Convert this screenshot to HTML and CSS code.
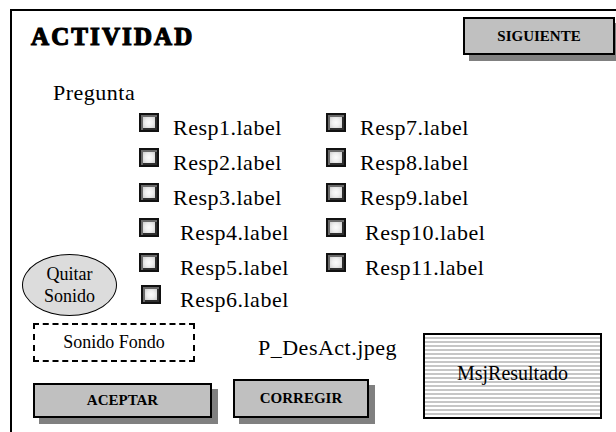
FILE: index.html
```html
<!DOCTYPE html>
<html lang="es">
<head>
<meta charset="utf-8">
<title>Actividad</title>
<link rel="stylesheet" href="styles.css">
</head>
<body>
<div class="frame">
  <header class="top">
    <h1 class="title">ACTIVIDAD</h1>
    <div class="btn btn-next">SIGUIENTE</div>
  </header>
  <p class="question">Pregunta</p>
  <section class="answers">
    <div class="side"><div class="mute">Quitar<br>Sonido</div></div>
    <ul class="col col-a">
      <li class="opt"><span class="box"></span><span class="lbl">Resp1.label</span></li>
      <li class="opt"><span class="box"></span><span class="lbl">Resp2.label</span></li>
      <li class="opt"><span class="box"></span><span class="lbl">Resp3.label</span></li>
      <li class="opt shift"><span class="box"></span><span class="lbl">Resp4.label</span></li>
      <li class="opt shift tight"><span class="box"></span><span class="lbl">Resp5.label</span></li>
      <li class="opt shift nudge"><span class="box"></span><span class="lbl">Resp6.label</span></li>
    </ul>
    <ul class="col col-b">
      <li class="opt"><span class="box"></span><span class="lbl">Resp7.label</span></li>
      <li class="opt"><span class="box"></span><span class="lbl">Resp8.label</span></li>
      <li class="opt"><span class="box"></span><span class="lbl">Resp9.label</span></li>
      <li class="opt shift"><span class="box"></span><span class="lbl">Resp10.label</span></li>
      <li class="opt shift"><span class="box"></span><span class="lbl">Resp11.label</span></li>
    </ul>
  </section>
  <section class="bottom">
    <div class="stack stack-left">
      <div class="sound">Sonido Fondo</div>
      <div class="btn btn-ok">ACEPTAR</div>
    </div>
    <div class="stack stack-mid">
      <p class="img-name">P_DesAct.jpeg</p>
      <div class="btn btn-fix">CORREGIR</div>
    </div>
    <div class="result">MsjResultado</div>
  </section>
</div>
</body>
</html>
```
FILE: styles.css
```css
* { box-sizing: border-box; }
html, body { margin: 0; padding: 0; background: #fff; overflow: hidden; }
.frame {
  font-family: "Liberation Serif", serif;
  color: #000;
  margin: 9px 0 0 10px;
  width: 606px;
  height: 423px;
  border-top: 2px solid #000;
  border-left: 2px solid #000;
}
.top {
  display: flex;
  align-items: flex-start;
  padding-top: 6px;
  height: 44px;
}
.title {
  font-family: "Liberation Serif", serif;
  margin: 7px 0 0 19px;
  font-size: 25px;
  line-height: 25px;
  font-weight: bold;
  letter-spacing: 2.1px;
  -webkit-text-stroke: 1.2px #000;
}
.btn {
  display: flex;
  align-items: center;
  justify-content: center;
  background: #c0c0c0;
  border: 2px solid #000;
  box-shadow: 6px 6px 0 #808080;
  font-family: "Liberation Serif", serif;
  font-weight: bold;
  font-size: 15px;
  line-height: 1;
}
.btn-next {
  margin-left: auto;
  margin-right: 1px;
  width: 152px;
  height: 38px;
}
.question {
  font-family: "Liberation Serif", serif;
  margin: 27px 0 0 41px;
  font-size: 22px;
  line-height: 22px;
  letter-spacing: 0.5px;
}
.answers {
  display: flex;
  margin-top: 9px;
  height: 210px;
}
.side { width: 127px; flex: none; }
.mute {
  font-family: "Liberation Serif", serif;
  margin: 141px 0 0 10px;
  width: 95px;
  height: 62px;
  border: 1.5px solid #000;
  border-radius: 50%;
  background: #dcdcdc;
  display: flex;
  align-items: center;
  justify-content: center;
  text-align: center;
  font-size: 18px;
  line-height: 22px;
}
.col {
  list-style: none;
  margin: 0;
  padding: 0;
  display: flex;
  flex-direction: column;
}
.col-a { width: 187px; flex: none; }
.opt {
  display: flex;
  align-items: flex-start;
  height: 35px;
}
.opt.tight { height: 32px; }
.opt.nudge .box { margin-left: 2px; }
.opt.nudge .lbl { margin-left: 19px; }
.box {
  width: 20px;
  height: 19px;
  flex: none;
  border: 2px solid #111;
  background: radial-gradient(circle at 50% 50%, #fbfbfb 0, #eeeeee 35%, #b8b8b8 100%);
  box-shadow: inset 2px 2px 0 #6a6a6a, inset -2px -2px 0 #2e2e2e;
}
.lbl {
  font-family: "Liberation Serif", serif;
  margin: 4px 0 0 14px;
  font-size: 22px;
  line-height: 22px;
  letter-spacing: 0.5px;
  white-space: nowrap;
}
.col-a .shift .lbl { margin-left: 21px; }
.col-a .shift.nudge .lbl { margin-left: 19px; }
.col-b .shift .lbl { margin-left: 19px; }
.bottom {
  display: flex;
  align-items: flex-start;
}
.stack { flex: none; }
.stack-left { margin-left: 21px; width: 179px; }
.sound {
  font-family: "Liberation Serif", serif;
  width: 162px;
  height: 39px;
  border: 2px dashed #000;
  display: flex;
  align-items: center;
  justify-content: center;
  font-size: 18px;
}
.btn-ok {
  margin-top: 21px;
  width: 179px;
  height: 35px;
}
.stack-mid { margin-left: 21px; width: 136px; }
.img-name {
  font-family: "Liberation Serif", serif;
  margin: 14px 0 0 25px;
  font-size: 22px;
  line-height: 22px;
  letter-spacing: 0.5px;
  white-space: nowrap;
}
.btn-fix {
  margin-top: 20px;
  width: 136px;
  height: 39px;
}
.result {
  font-family: "Liberation Serif", serif;
  margin: 10px 0 0 54px;
  width: 179px;
  height: 86px;
  flex: none;
  border: 2px solid #000;
  background: repeating-linear-gradient(to bottom, #fff 0, #fff 2px, #c6c6c6 2px, #c6c6c6 4px);
  display: flex;
  align-items: center;
  justify-content: center;
  font-size: 20px;
  padding-bottom: 6px;
}
```
